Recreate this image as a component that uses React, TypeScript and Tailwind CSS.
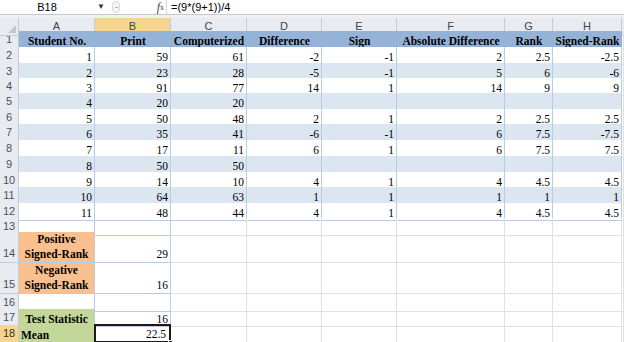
import React from 'react';

const cols = ['A', 'B', 'C', 'D', 'E', 'F', 'G', 'H'];

const heightCls: Record<number, string> = {
  13: 'h-[13px]',
  14: 'h-[14px]',
  15: 'h-[15px]',
  16: 'h-[16px]',
  31: 'h-[31px]',
};

const data: string[][] = [
  ['1', '59', '61', '-2', '-1', '2', '2.5', '-2.5'],
  ['2', '23', '28', '-5', '-1', '5', '6', '-6'],
  ['3', '91', '77', '14', '1', '14', '9', '9'],
  ['4', '20', '20', '', '', '', '', ''],
  ['5', '50', '48', '2', '1', '2', '2.5', '2.5'],
  ['6', '35', '41', '-6', '-1', '6', '7.5', '-7.5'],
  ['7', '17', '11', '6', '1', '6', '7.5', '7.5'],
  ['8', '50', '50', '', '', '', '', ''],
  ['9', '14', '10', '4', '1', '4', '4.5', '4.5'],
  ['10', '64', '63', '1', '1', '1', '1', '1'],
  ['11', '48', '44', '4', '1', '4', '4.5', '4.5'],
];

const dataHeights = [16, 15, 15, 16, 15, 16, 16, 16, 15, 16, 15];

const gridCols = 'grid grid-cols-[19px_76px_76px_76px_75px_75px_108px_48px_69px_1fr]';

const RowHead: React.FC<{ n: number; active?: boolean; bottom?: boolean }> = ({ n, active, bottom }) => (
  <div
    className={`flex justify-center border-r border-b border-[#c5cbd3] text-[11px] font-['Liberation_Sans',sans-serif] ${
      bottom ? 'items-end pb-[1px]' : 'items-center'
    } ${active ? 'bg-[#f8d58c] text-[#333]' : 'bg-[#e8ebf0] text-[#4a5260]'}`}
  >
    {n}
  </div>
);

const Formula: React.FC = () => (
  <div className="h-[18px] flex flex-col bg-[#eef0f3]">
    <div className="h-[15px] flex items-center bg-white border-b border-[#c4c8ce] text-[11px] font-['Liberation_Sans',sans-serif] text-black">
      <div className="w-[94px] flex items-center justify-center">B18</div>
      <div className="w-[14px] text-[8px] text-[#333] flex items-center justify-center">▼</div>
      <div className="w-[8px] h-[12px] ml-[4px] rounded-full border border-[#d3d6da] bg-[#f4f5f7] flex items-center justify-center">
        <div className="w-[3px] h-[1px] bg-[#b0b4ba]" />
      </div>
      <div className="w-[46px] flex justify-end pr-[2px] italic font-['Liberation_Serif',serif] text-[12px] text-[#444]">
        f<span className="text-[8px] not-italic mt-[4px]">x</span>
      </div>
      <div className="w-[1px] h-[15px] bg-[#d4d7db]" />
      <div className="pl-[4px]">=(9*(9+1))/4</div>
    </div>
  </div>
);

export default function App() {
  const tableLine = 'border-r border-b border-[#b8cce4]';
  const plainLine = 'border-r border-b border-[#e1e1e1]';

  const numCell = (v: string, band: boolean, key: string) => (
    <div
      key={key}
      className={`flex items-end justify-end pr-[2px] leading-[14px] ${band ? 'bg-[#dce6f1]' : 'bg-white'} ${tableLine}`}
    >
      {v}
    </div>
  );

  const blanks = () => cols.slice(2).map((c) => <div key={c} className={plainLine} />);

  return (
    <div className="w-[624px] h-[342px] overflow-hidden bg-white font-['Liberation_Serif',serif] text-[11.5px] text-black">
      <Formula />

      {/* column letters */}
      <div className={`${gridCols} h-[13px] text-[11px] font-['Liberation_Sans',sans-serif] text-[#3c4452]`}>
        <div className="bg-[#e8ebf0] border-r border-b border-[#c5cbd3] relative">
          <div className="absolute right-[2px] bottom-[2px] w-0 h-0 border-l-[8px] border-l-transparent border-b-[8px] border-b-[#c3c8ce]" />
        </div>
        {cols.map((c) => (
          <div
            key={c}
            className={`flex items-center justify-center border-r border-b border-[#c5cbd3] ${
              c === 'B' ? 'bg-[#f8d58c]' : 'bg-[#e8ebf0]'
            }`}
          >
            {c}
          </div>
        ))}
        <div className="bg-[#e8ebf0] border-b border-[#c5cbd3]" />
      </div>

      {/* header row 1 */}
      <div className={`${gridCols} h-[16px]`}>
        <RowHead n={1} />
        {['Student No.', 'Print', 'Computerized', 'Difference', 'Sign', 'Absolute Difference', 'Rank', 'Signed-Rank'].map((h) => (
          <div key={h} className="flex items-end justify-center leading-[14px] font-bold bg-[#95b3d7] border-b border-[#95b3d7] whitespace-nowrap">
            {h}
          </div>
        ))}
        <div className={plainLine} />
      </div>

      {/* data rows 2-12 */}
      {data.map((row, i) => {
        const band = i % 2 === 1;
        return (
          <div key={i} className={`${gridCols} ${heightCls[dataHeights[i]]}`}>
            <RowHead n={i + 2} />
            {row.map((v, j) => numCell(v, band, `${i}-${j}`))}
            <div className={plainLine} />
          </div>
        );
      })}

      {/* row 13 */}
      <div className={`${gridCols} h-[14px]`}>
        <RowHead n={13} />
        <div className={tableLine} />
        <div className={tableLine} />
        {blanks()}
        <div className={plainLine} />
      </div>

      {/* rows 14, 15 */}
      {([
        ['Positive', 'Signed-Rank', '29', 14],
        ['Negative', 'Signed-Rank', '16', 15],
      ] as [string, string, string, number][]).map(([a, b, v, n]) => (
        <div key={n} className={`${gridCols} h-[31px]`}>
          <RowHead n={n} bottom />
          <div className={`flex flex-col items-center justify-end leading-[15px] font-bold bg-[#fabf8f] ${tableLine}`}>
            <span>{a}</span>
            <span>{b}</span>
          </div>
          <div className={`flex items-end justify-end pr-[2px] leading-[15px] ${tableLine}`}>{v}</div>
          {blanks()}
          <div className={plainLine} />
        </div>
      ))}

      {/* row 16 */}
      <div className={`${gridCols} h-[15px]`}>
        <RowHead n={16} />
        <div className={tableLine} />
        <div className={tableLine} />
        {blanks()}
        <div className={plainLine} />
      </div>

      {/* row 17 */}
      <div className={`${gridCols} h-[16px]`}>
        <RowHead n={17} />
        <div className={`flex items-end justify-center leading-[14px] font-bold bg-[#c4d79b] ${tableLine} whitespace-nowrap`}>
          Test Statistic
        </div>
        <div className={`flex items-end justify-end pr-[2px] leading-[14px] ${tableLine}`}>16</div>
        {blanks()}
        <div className={plainLine} />
      </div>

      {/* row 18 */}
      <div className={`${gridCols} h-[16px]`}>
        <RowHead n={18} active />
        <div className={`flex items-end justify-start pl-[2px] leading-[14px] font-bold bg-[#c4d79b] ${tableLine}`}>Mean</div>
        <div className="relative flex items-end justify-end pr-[3px] leading-[14px] border-2 border-[#1a1a1a] -ml-[1px] -mt-[1px]">
          22.5
          <div className="absolute right-[-4px] bottom-[-4px] w-[5px] h-[5px] bg-[#1a1a1a] border border-white" />
        </div>
        {blanks()}
        <div className={plainLine} />
      </div>
    </div>
  );
}
